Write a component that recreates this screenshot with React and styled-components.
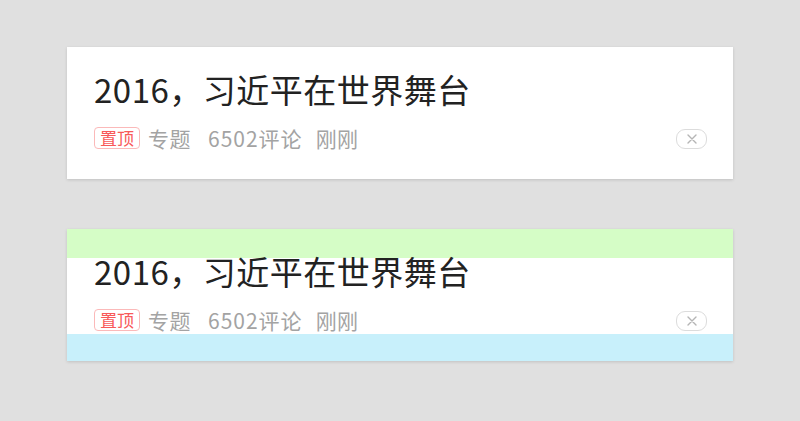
import React from 'react';
import styled, { createGlobalStyle } from 'styled-components';

/*
    Feed cards - the second card shows its top / bottom padding
*/

const GlobalStyle = createGlobalStyle`
    html, body {
        margin: 0;
        padding: 0;
        background: #e0e0e0;
    }
    body {
        font-family: "Noto Sans CJK SC", "Noto Sans", sans-serif;
    }
`;

const Page = styled.div`
    padding: 47px 67px;
    display: flex;
    flex-direction: column;
    gap: 50px;
`;

const Card = styled.div`
    background: #fff;
    display: flex;
    flex-direction: column;
    box-shadow: 0 1px 3px rgba(0, 0, 0, 0.14);
`;

const Pad = styled.div`
    height: ${p => p.size}px;
    background: ${p => p.tint || 'transparent'};
`;

const Body = styled.div`
    padding: 0 26px 0 27px;
    display: flex;
    flex-direction: column;
`;

const Title = styled.div`
    font-size: 33px;
    line-height: 26px;
    letter-spacing: 0.5px;
    color: #222;
    white-space: nowrap;
`;

const Meta = styled.div`
    margin-top: 25px;
    height: 25px;
    display: flex;
    align-items: flex-start;
`;

const Tag = styled.span`
    height: 20px;
    line-height: 20px;
    padding: 0 5px;
    font-size: 17px;
    color: #f85959;
    border: 1px solid #fbb9b9;
    border-radius: 4px;
`;

const Info = styled.span`
    margin-left: ${p => p.gap}px;
    font-size: 21px;
    line-height: 22px;
    letter-spacing: ${p => p.spread || 0.5}px;
    color: #a3a3a3;
`;

const Close = styled.button`
    margin-left: auto;
    margin-top: 2px;
    width: 31px;
    height: 20px;
    padding: 0;
    border: 1px solid #dcdcdc;
    border-radius: 9px;
    background: #fff;
    display: flex;
    align-items: center;
    justify-content: center;
`;

const CrossIcon = () => (
    <svg width="10" height="10" viewBox="0 0 10 10">
        <path d="M1 1 L9 9 M9 1 L1 9" stroke="#b5b5b5" strokeWidth="1.4" strokeLinecap="round" />
    </svg>
);

const NewsCard = ({ top, bottom }) => (
    <Card>
        <Pad size={29} tint={top} />
        <Body>
            <Title>2016，习近平在世界舞台</Title>
            <Meta>
                <Tag>置顶</Tag>
                <Info gap={8}>专题</Info>
                <Info gap={17} spread={1}>6502评论</Info>
                <Info gap={13}>刚刚</Info>
                <Close><CrossIcon /></Close>
            </Meta>
        </Body>
        <Pad size={27} tint={bottom} />
    </Card>
);

export default function App() {
    return (
        <Page>
            <GlobalStyle />
            <NewsCard />
            <NewsCard top="#d5fdc6" bottom="#c8f0fb" />
        </Page>
    );
}
